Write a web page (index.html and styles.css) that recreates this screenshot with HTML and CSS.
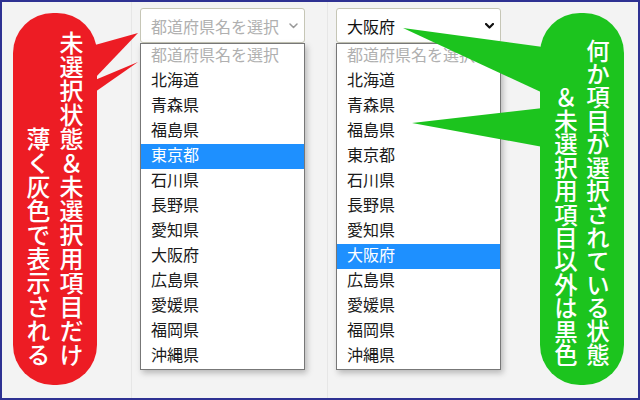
FILE: index.html
```html
<!DOCTYPE html>
<html lang="ja">
<head>
<meta charset="utf-8">
<link rel="stylesheet" href="styles.css">
</head>
<body>
<div class="frame">
  <div class="col col-note">
    <div class="bubble bubble-red">
      <p class="vtext">未選択状態＆未選択用項目だけ<br>薄く灰色で表示される</p>
    </div>
  </div>
  <div class="col col-demo">
    <div class="select-wrap">
      <div class="select">
        <span class="select-value placeholder">都道府県名を選択</span>
        <svg class="chev chev-light" width="9" height="6" viewBox="0 0 9 6"><polyline points="1,1 4.5,4.5 8,1"/></svg>
      </div>
      <ul class="list">
        <li class="placeholder">都道府県名を選択</li>
        <li>北海道</li>
        <li>青森県</li>
        <li>福島県</li>
        <li class="active">東京都</li>
        <li>石川県</li>
        <li>長野県</li>
        <li>愛知県</li>
        <li>大阪府</li>
        <li>広島県</li>
        <li>愛媛県</li>
        <li>福岡県</li>
        <li>沖縄県</li>
      </ul>
    </div>
  </div>
  <div class="col col-demo col-last">
    <div class="select-wrap">
      <div class="select">
        <span class="select-value">大阪府</span>
        <svg class="chev chev-dark" width="9" height="6" viewBox="0 0 9 6"><polyline points="1,1 4.5,4.5 8,1"/></svg>
      </div>
      <ul class="list">
        <li class="placeholder">都道府県名を選択</li>
        <li>北海道</li>
        <li>青森県</li>
        <li>福島県</li>
        <li>東京都</li>
        <li>石川県</li>
        <li>長野県</li>
        <li>愛知県</li>
        <li class="active">大阪府</li>
        <li>広島県</li>
        <li>愛媛県</li>
        <li>福岡県</li>
        <li>沖縄県</li>
      </ul>
    </div>
    <div class="bubble bubble-green">
      <p class="vtext">何か項目が選択されている状態<br>＆未選択用項目以外は黒色</p>
    </div>
  </div>
  <svg class="pointers" width="640" height="400" viewBox="0 0 640 400">
    <polygon class="p-red" points="95,45 138,33 95,78"/>
    <polygon class="p-red" points="95,80 138,62 95,92"/>
    <polygon class="p-green" points="543,47 403,28 543,93"/>
    <polygon class="p-green" points="543,108 412,123 543,147"/>
  </svg>
</div>
</body>
</html>
```
FILE: styles.css
```css
* { box-sizing: border-box; }
html, body { margin: 0; padding: 0; }
body {
  width: 640px;
  height: 400px;
  font-family: "Noto Sans CJK JP", "Noto Sans", sans-serif;
}
.frame {
  position: relative;
  width: 640px;
  height: 400px;
  border: 2px solid #2e3192;
  background: #f3f3f3;
  display: grid;
  grid-template-columns: 129px 196px 1fr;
}
.col { height: 100%; }
.col-note { padding: 11px 0 0 11px; }
.col-demo {
  border-left: 1px solid #e6e6e6;
  padding: 6px 0 0 8px;
}
.col-last {
  display: flex;
  align-items: flex-start;
  gap: 39px;
}
.bubble {
  width: 84px;
  height: 372px;
  border-radius: 40px;
  display: flex;
  justify-content: center;
  color: #fff;
  padding-bottom: 18px;
}
.bubble-red { background: #ed1c24; }
.bubble-green { background: #1cc41e; margin-top: 5px; }
.vtext {
  margin: 0;
  writing-mode: vertical-rl;
  text-align: end;
  font-size: 24px;
  line-height: 33px;
  font-weight: 500;
  height: 100%;
}
.bubble-green .vtext { font-size: 23.4px; line-height: 32px; }
.select-wrap { width: 165px; }
.select {
  height: 35px;
  border: 1px solid #c6c6b6;
  border-radius: 3px;
  background: #fff;
  display: flex;
  align-items: center;
  justify-content: space-between;
  padding: 0 6px 0 10px;
}
.select-value { font-size: 16px; color: #111; line-height: 20px; }
.placeholder { color: #b0b0b0 !important; }
.chev { fill: none; stroke-linecap: round; stroke-linejoin: round; }
.chev-light { stroke: #999; stroke-width: 1.5; }
.chev-dark { stroke: #111; stroke-width: 2.2; }
.list {
  list-style: none;
  margin: 0;
  padding: 0;
  border: 1px solid #777;
  background: #fff;
  box-shadow: 2px 3px 6px rgba(0,0,0,0.25);
}
.list li {
  height: 25px;
  line-height: 21px;
  padding-left: 10px;
  font-size: 16px;
  color: #1a1a1a;
}
.list li.active { background: #1e90ff; color: #fff; }
.pointers {
  position: absolute;
  left: -2px;
  top: -2px;
  pointer-events: none;
}
.p-red { fill: #ed1c24; }
.p-green { fill: #1cc41e; }
```
